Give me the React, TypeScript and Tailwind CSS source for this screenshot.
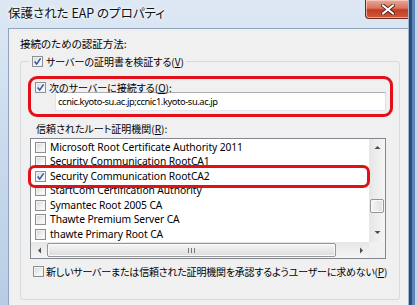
import React from 'react';

const jp = "font-['Meiryo_UI','Noto_Sans_CJK_JP',sans-serif] [font-feature-settings:'palt']";
const lat = "font-['Noto_Sans','Noto_Sans_CJK_JP',sans-serif]";

const roots = [
  { name: 'Microsoft Root Certificate Authority 2011', checked: false },
  { name: 'Security Communication RootCA1', checked: false },
  { name: 'Security Communication RootCA2', checked: true },
  { name: 'StartCom Certification Authority', checked: false },
  { name: 'Symantec Root 2005 CA', checked: false },
  { name: 'Thawte Premium Server CA', checked: false },
  { name: 'thawte Primary Root CA', checked: false },
];

// Win7 style checkbox
const CheckBox: React.FC<{ checked?: boolean }> = ({ checked }) => (
  <span className="relative inline-block w-[11px] h-[11px] shrink-0 border border-[#8e8f8f] bg-[linear-gradient(135deg,#d4d4d4,#f7f7f7_70%,#ffffff)] shadow-[inset_0_0_0_1px_#f2f2f2]">
    {checked && (
      <svg viewBox="0 0 9 9" className="absolute left-0 top-0 w-[9px] h-[9px]">
        <path d="M1.6 4.6 L3.7 7.1 L7.6 1.4" fill="none" stroke="#3150a8" strokeWidth="1.5" />
      </svg>
    )}
  </span>
);

const Arrow: React.FC<{ dir: 'up' | 'down' | 'left' | 'right' }> = ({ dir }) => {
  const d = {
    up: 'M0.5 4 L3.5 1 L6.5 4 Z',
    down: 'M0.5 1 L3.5 4 L6.5 1 Z',
    left: 'M4 0.5 L1 3.5 L4 6.5 Z',
    right: 'M1 0.5 L4 3.5 L1 6.5 Z',
  }[dir];
  const box = dir === 'up' || dir === 'down' ? '0 0 7 5' : '0 0 5 7';
  const cls = dir === 'up' || dir === 'down' ? 'w-[7px] h-[5px]' : 'w-[5px] h-[7px]';
  return (
    <svg viewBox={box} className={cls}>
      <path d={d} fill="#4d4d4d" />
    </svg>
  );
};

export default function App() {
  return (
    <div className="relative w-[418px] h-[305px] overflow-hidden bg-[linear-gradient(180deg,#dde8f4_0%,#cbdbed_45%,#b8cde5_100%)]">
      {/* title bar */}
      <div className="h-[28px] flex items-center pl-[8px] pb-[1px]">
        <span className={`${jp} text-[12.5px] text-[#111] [text-shadow:0_0_6px_#ffffff,0_0_3px_#ffffff]`}>
          保護された EAP のプロパティ
        </span>
      </div>

      {/* close button */}
      <div className="absolute top-0 left-[365px] w-[46px] h-[19px] rounded-b-[4px] border border-t-0 border-[#6b2a20] bg-[linear-gradient(180deg,#e9a898_0%,#d9745e_45%,#c23c22_55%,#cf5a3e_100%)] shadow-[inset_0_0_0_1px_rgba(255,220,210,0.6)] flex items-center justify-center">
        <svg viewBox="0 0 14 11" className="w-[14px] h-[11px]">
          <path d="M2 1.5 L12 9.5 M12 1.5 L2 9.5" stroke="#4a1a12" strokeWidth="3.6" strokeLinecap="square" />
          <path d="M2 1.5 L12 9.5 M12 1.5 L2 9.5" stroke="#ffffff" strokeWidth="2" strokeLinecap="square" />
        </svg>
      </div>

      {/* right frame shading */}
      <div className="absolute top-0 right-0 w-[10px] h-[305px] flex">
        <div className="w-[1px] bg-[#9eb3cc]" />
        <div className="w-[3px] bg-[#2c4c78]" />
        <div className="w-[3px] bg-[#5c84b8]" />
        <div className="flex-1 bg-[#c3d5ea]" />
      </div>

      {/* client area */}
      <div className="ml-[8px] w-[400px] h-[277px] bg-[#f0f0f0] border-t border-l border-[#8ea3bd] pt-[8px]">
        <div className={`${jp} ml-[11px] text-[10.5px] leading-[14px] text-black`}>接続のための認証方法:</div>

        <fieldset className="ml-[11px] mt-[3px] w-[380px] border border-[#d5dadf] rounded-[3px] pb-[21px]">
          <legend className="ml-[8px] pl-[3px] pr-[2px]">
            <span className={`${jp} flex items-center gap-[3px] h-[15px] text-[10px] text-black`}>
              <CheckBox checked />
              <span>サーバーの証明書を検証する(<span className="underline">V</span>)</span>
            </span>
          </legend>

          {/* connect to these servers */}
          <div className="ml-[7px] mt-[7px] w-[365px] border-[3px] border-[#e3101a] rounded-[9px] pl-[4px] pt-[3px] pb-[3px]">
            <div className={`${jp} flex items-center gap-[3px] h-[10px] text-[10px] text-black`}>
              <CheckBox checked />
              <span>次のサーバーに接続する(<span className="underline">O</span>):</span>
            </div>
            <div className="ml-[20px] w-[331px] h-[19px] bg-white border border-[#abadb3] border-b-[#e3e9ef] border-l-[#e2e3ea] border-r-[#dbdfe6] flex items-center pl-[2px]">
              <span className={`${lat} text-[9.3px] text-black tracking-[-0.4px]`}>ccnic.kyoto-su.ac.jp;ccnic1.kyoto-su.ac.jp</span>
            </div>
          </div>

          <div className={`${jp} ml-[15px] mt-[5px] h-[14px] leading-[14px] text-[10px] text-black`}>
            信頼されたルート証明機関(<span className="underline">R</span>):
          </div>

          {/* trusted roots list */}
          <div className="relative ml-[9px] mt-[2px] w-[356px] h-[121px] bg-white border border-[#828790] grid grid-cols-[1fr_16px] grid-rows-[1fr_16px]">
            <div className="pt-[1px] overflow-hidden">
              {roots.map((r) => (
                <div key={r.name} className="h-[14.5px] flex items-center gap-[4px] pl-[4px]">
                  <CheckBox checked={r.checked} />
                  <span className={`${lat} text-[10.3px] text-black whitespace-nowrap tracking-[-0.1px]`}>{r.name}</span>
                </div>
              ))}
            </div>

            {/* vertical scrollbar */}
            <div className="bg-[linear-gradient(90deg,#e6e6e6,#f5f5f5)] flex flex-col">
              <div className="h-[16px] flex items-center justify-center"><Arrow dir="up" /></div>
              <div className="h-[44px]" />
              <div className="ml-[1px] w-[14px] h-[14px] rounded-[2px] border border-[#969696] bg-[linear-gradient(90deg,#f6f6f6,#e0e0e0)] shadow-[inset_0_0_0_1px_#fbfbfb]" />
              <div className="flex-1" />
              <div className="h-[16px] flex items-center justify-center pb-[3px]"><Arrow dir="down" /></div>
            </div>

            {/* horizontal scrollbar */}
            <div className="bg-[linear-gradient(180deg,#e6e6e6,#f5f5f5)] flex items-center">
              <div className="w-[16px] h-[16px] flex items-center justify-center"><Arrow dir="left" /></div>
              <div className="w-[289px] h-[14px] rounded-[2px] border border-[#969696] bg-[linear-gradient(180deg,#f6f6f6,#dcdcdc)] shadow-[inset_0_0_0_1px_#fbfbfb] flex items-center justify-center gap-[2px]">
                <span className="w-[1px] h-[5px] bg-[#777]" />
                <span className="w-[1px] h-[5px] bg-[#777]" />
                <span className="w-[1px] h-[5px] bg-[#777]" />
              </div>
              <div className="flex-1" />
              <div className="w-[16px] h-[16px] flex items-center justify-center"><Arrow dir="right" /></div>
            </div>
            <div className="bg-[#f0f0f0]" />

            {/* highlight around RootCA2 */}
            <div className="absolute left-[-3px] top-[26px] w-[342px] h-[23px] border-[3px] border-[#e3101a] rounded-[7px]" />
          </div>

          <div className={`${jp} ml-[12px] mt-[5px] h-[14px] flex items-center gap-[2px] text-[10px] text-black whitespace-nowrap`}>
            <CheckBox />
            <span className="tracking-[-0.2px]">
              新しいサーバーまたは信頼された証明機関を承認するようユーザーに求めない(<span className="underline">P</span>)
            </span>
          </div>
        </fieldset>
      </div>
    </div>
  );
}
